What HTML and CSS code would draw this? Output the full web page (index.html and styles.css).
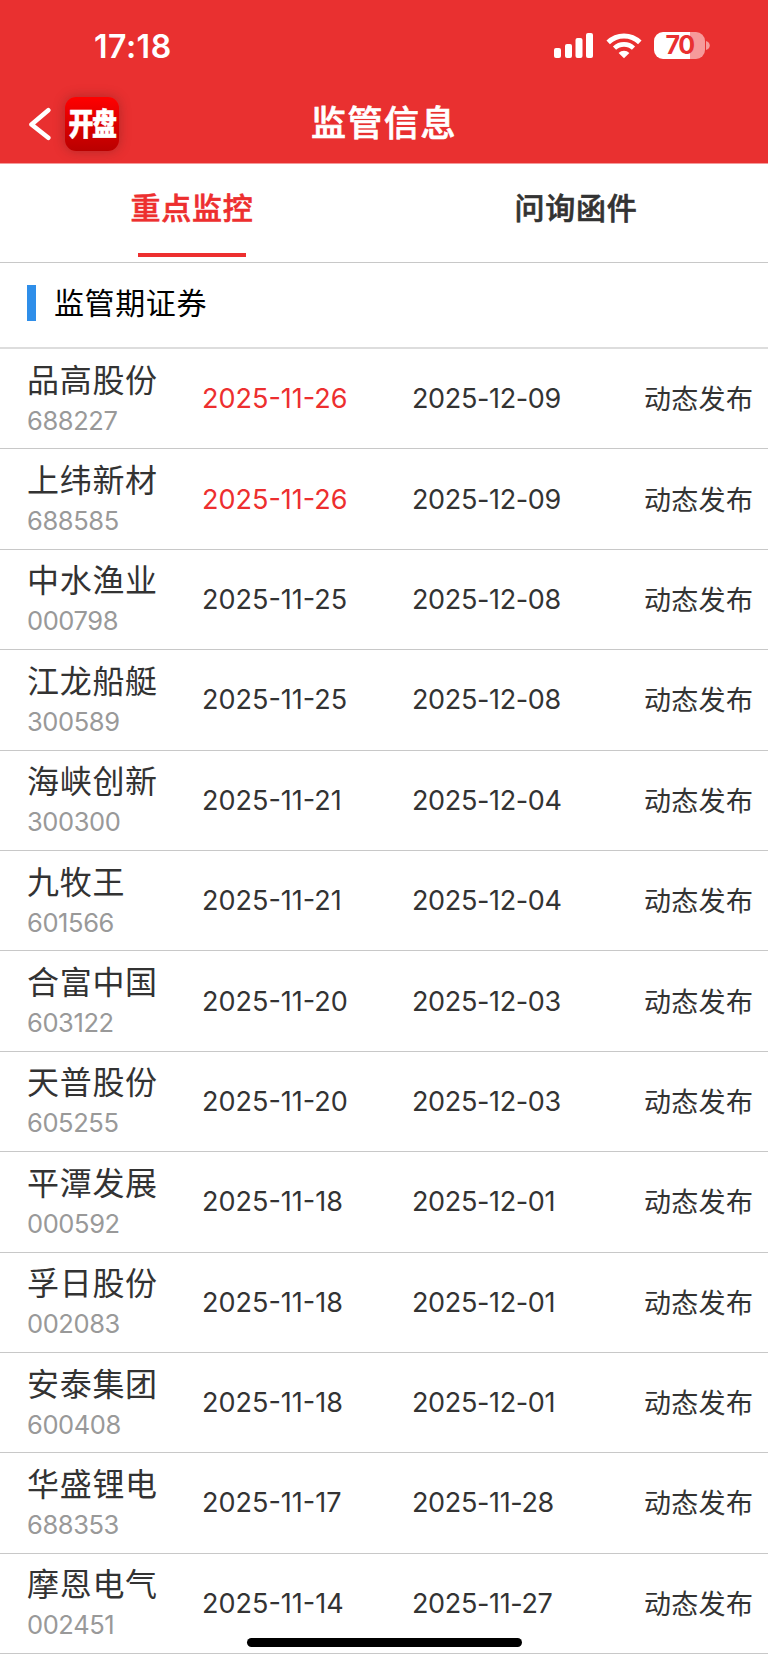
FILE: index.html
```
<!DOCTYPE html>
<html lang="zh-CN">
<head>
    <meta charset="UTF-8">
    <meta name="viewport" content="width=device-width, initial-scale=1.0">
    <title>监管信息</title>
    <link rel="stylesheet" href="styles.css">
</head>
<body>

<div class="header">
    <div class="status-bar">
        <span class="time">17:18</span>
        <div class="status-icons">
            <svg class="signal" width="40" height="26" viewBox="0 0 40 26" fill="#fff">
                <rect x="0" y="16" width="7" height="10" rx="2"/>
                <rect x="11" y="12" width="7" height="14" rx="2"/>
                <rect x="21.5" y="6" width="7" height="20" rx="2"/>
                <rect x="32" y="1" width="7" height="25" rx="2"/>
            </svg>
            <svg class="wifi" width="36" height="27" viewBox="0 0 36 27" fill="none" stroke="#fff">
                <path d="M2.2 10.4a22.6 22.6 0 0 1 31.6 0" stroke-width="5"/>
                <path d="M8.5 16.2a13.8 13.8 0 0 1 19 0" stroke-width="4.6"/>
                <path d="M18 26.3l-5.4-5.4a8 8 0 0 1 10.8 0z" fill="#fff" stroke="none"/>
            </svg>
            <div class="battery"><span>70</span></div>
            <svg class="battery-cap" width="4" height="9" viewBox="0 0 4 9"><path d="M0 0c5 1.5 5 7.5 0 9z" fill="#f69a9a"/></svg>
        </div>
    </div>
    <div class="title-bar">
        <div class="back">
            <svg width="24" height="34" viewBox="0 0 24 34" fill="none" stroke="#fff" stroke-width="4.6" stroke-linecap="round" stroke-linejoin="round">
                <path d="M20.3 3.2L3.5 17.500L20.3 30.8"/>
            </svg>
            <div class="app-logo"><span>开盘</span></div>
        </div>
        <h1>监管信息</h1>
    </div>
</div>

<div class="tabs">
    <div class="tab active">重点监控</div>
    <div class="tab">问询函件</div>
</div>

<div class="section-title"><span>监管期证券</span></div>

<div class="list">
    <div class="row">
        <div class="stock"><p class="name">品高股份</p><p class="code">688227</p></div>
        <span class="start new">2025-11-26</span><span class="end">2025-12-09</span><span class="action">动态发布</span>
    </div>
    <div class="row">
        <div class="stock"><p class="name">上纬新材</p><p class="code">688585</p></div>
        <span class="start new">2025-11-26</span><span class="end">2025-12-09</span><span class="action">动态发布</span>
    </div>
    <div class="row">
        <div class="stock"><p class="name">中水渔业</p><p class="code">000798</p></div>
        <span class="start">2025-11-25</span><span class="end">2025-12-08</span><span class="action">动态发布</span>
    </div>
    <div class="row">
        <div class="stock"><p class="name">江龙船艇</p><p class="code">300589</p></div>
        <span class="start">2025-11-25</span><span class="end">2025-12-08</span><span class="action">动态发布</span>
    </div>
    <div class="row">
        <div class="stock"><p class="name">海峡创新</p><p class="code">300300</p></div>
        <span class="start">2025-11-21</span><span class="end">2025-12-04</span><span class="action">动态发布</span>
    </div>
    <div class="row">
        <div class="stock"><p class="name">九牧王</p><p class="code">601566</p></div>
        <span class="start">2025-11-21</span><span class="end">2025-12-04</span><span class="action">动态发布</span>
    </div>
    <div class="row">
        <div class="stock"><p class="name">合富中国</p><p class="code">603122</p></div>
        <span class="start">2025-11-20</span><span class="end">2025-12-03</span><span class="action">动态发布</span>
    </div>
    <div class="row">
        <div class="stock"><p class="name">天普股份</p><p class="code">605255</p></div>
        <span class="start">2025-11-20</span><span class="end">2025-12-03</span><span class="action">动态发布</span>
    </div>
    <div class="row">
        <div class="stock"><p class="name">平潭发展</p><p class="code">000592</p></div>
        <span class="start">2025-11-18</span><span class="end">2025-12-01</span><span class="action">动态发布</span>
    </div>
    <div class="row">
        <div class="stock"><p class="name">孚日股份</p><p class="code">002083</p></div>
        <span class="start">2025-11-18</span><span class="end">2025-12-01</span><span class="action">动态发布</span>
    </div>
    <div class="row">
        <div class="stock"><p class="name">安泰集团</p><p class="code">600408</p></div>
        <span class="start">2025-11-18</span><span class="end">2025-12-01</span><span class="action">动态发布</span>
    </div>
    <div class="row">
        <div class="stock"><p class="name">华盛锂电</p><p class="code">688353</p></div>
        <span class="start">2025-11-17</span><span class="end">2025-11-28</span><span class="action">动态发布</span>
    </div>
    <div class="row">
        <div class="stock"><p class="name">摩恩电气</p><p class="code">002451</p></div>
        <span class="start">2025-11-14</span><span class="end">2025-11-27</span><span class="action">动态发布</span>
    </div>
</div>

<div class="home-indicator"></div>

</body>
</html>
```
FILE: styles.css
```
* {
    box-sizing: border-box;
    margin: 0;
    padding: 0;
}

body {
    width: 768px;
    height: 1662px;
    overflow: hidden;
    font-family: Inter, 'Noto Sans CJK SC', sans-serif;
    background-color: #fff;
    color: #333;
}

.header {
    height: 164px;
    background-color: #e93030;
    border-bottom: 1px solid #f49a9a;
    color: #fff;
}

.status-bar {
    display: flex;
    justify-content: space-between;
    height: 84px;
    padding: 32px 58px 0 94px;
}

.time {
    font-size: 32px;
    font-weight: 600;
    line-height: 29px;
    letter-spacing: 0.5px;
}

.status-icons {
    display: flex;
}

.wifi {
    margin-left: 12px;
}

.battery {
    width: 51px;
    height: 27px;
    margin-left: 12px;
    border-radius: 9px;
    background: linear-gradient(to right, #fff 36px, #f69a9a 36px);
    color: #e93030;
    font-size: 25px;
    font-weight: 700;
    line-height: 27px;
    letter-spacing: -1.5px;
    text-align: center;
}

.battery-cap {
    margin: 9px 0 0 1px;
}

.title-bar {
    display: grid;
    grid-template-columns: 1fr auto 1fr;
    height: 79px;
}

.back {
    display: flex;
    align-items: flex-start;
    padding: 13px 0 0 28px;
}

.back svg {
    margin: 10px 13px 0 0;
}

.app-logo {
    display: flex;
    justify-content: center;
    width: 54px;
    height: 54px;
    border-radius: 11px;
    background: linear-gradient(#ff0000, #b90000);
    box-shadow: 0 0 12px rgba(90, 30, 30, 0.4);
}

.app-logo span {
    font-size: 25px;
    font-weight: 900;
    line-height: 54px;
    letter-spacing: -1.5px;
    transform: scaleY(1.22);
    -webkit-text-stroke: 0.4px #fff;
}

h1 {
    font-size: 35px;
    font-weight: 500;
    line-height: 79px;
    letter-spacing: 1.5px;
    -webkit-text-stroke: 0.7px #fff;
}

.tabs {
    display: flex;
    height: 99px;
    border-bottom: 1px solid #c8c8c8;
}

.tab {
    display: flex;
    flex-direction: column;
    align-items: center;
    flex: 1;
    font-size: 30px;
    font-weight: 500;
    line-height: 89px;
    letter-spacing: 0.8px;
    -webkit-text-stroke: 0.6px;
}

.tab.active {
    color: #ed2f2f;
}

.tab.active::after {
    content: "";
    width: 108px;
    height: 4px;
    background-color: #ed2f2f;
}

.section-title {
    display: flex;
    align-items: center;
    height: 86px;
    padding: 0 0 4px 27px;
    border-bottom: 2px solid #ddd;
    color: #000;
    font-size: 30px;
    letter-spacing: 0.6px;
}

.section-title::before {
    content: "";
    width: 9px;
    height: 36px;
    margin-right: 18px;
    background-color: #2f8ee9;
}

.section-title span {
    padding-bottom: 4px;
}

.row {
    display: grid;
    grid-template-columns: 174px 210px 232px 1fr;
    align-items: center;
    height: 100.4px;
    padding-left: 28px;
    border-bottom: 1px solid #c8c8c8;
    font-size: 27px;
}

.stock {
    padding-top: 4px;
}

.name {
    font-size: 32px;
    line-height: 40px;
    letter-spacing: 0.7px;
    margin-left: -1px;
}

.code {
    color: #999;
    font-size: 25.5px;
    line-height: 40px;
    letter-spacing: -0.4px;
    margin-left: -1px;
}

.end {
    letter-spacing: -0.35px;
}

.action {
    padding-bottom: 2px;
    letter-spacing: 0.3px;
}

.new {
    color: #ed2f2f;
}

.home-indicator {
    position: absolute;
    left: 247px;
    top: 1638px;
    width: 275px;
    height: 9px;
    border-radius: 5px;
    background-color: #000;
}
```
